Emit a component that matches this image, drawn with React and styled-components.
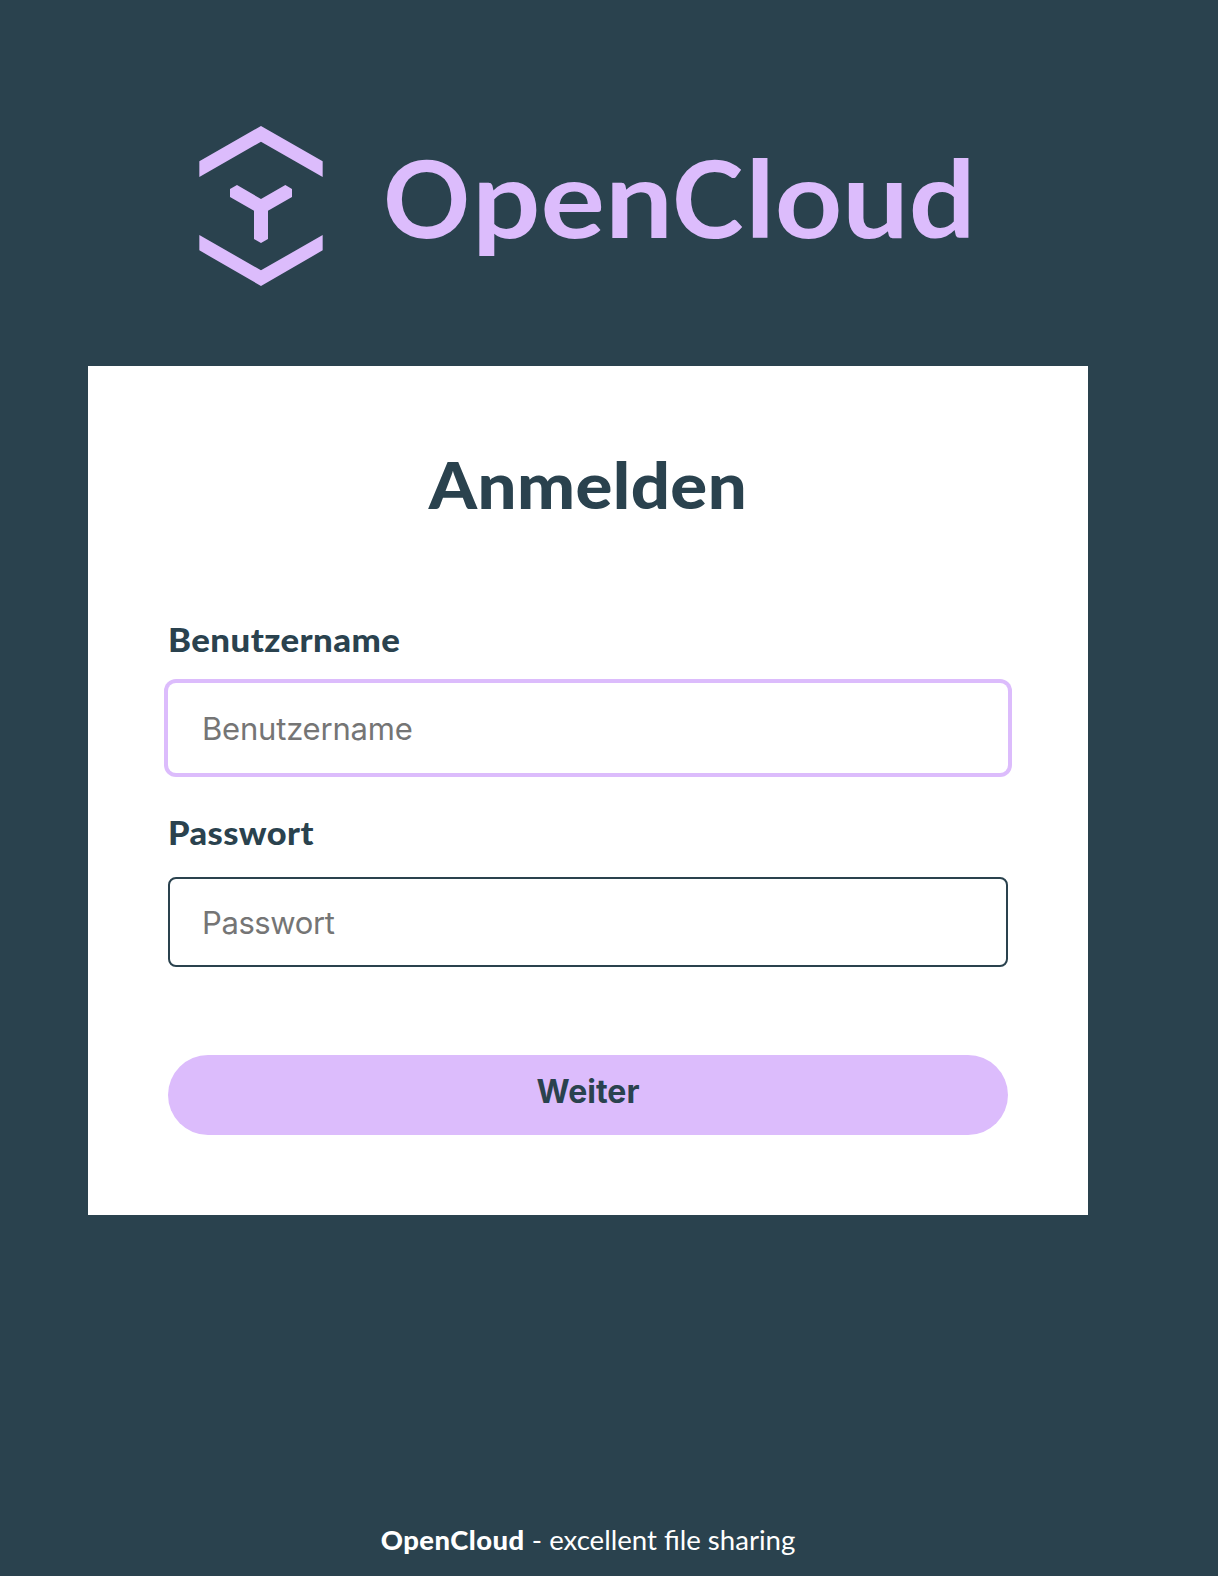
import React from "react";
import styled, { createGlobalStyle } from "styled-components";

const slate = "#2a424e";
const lilac = "#dcbcfc";
const brandFont = 'Lato, "Open Sans", sans-serif';
const uiFont = 'Inter, "Liberation Sans", sans-serif';

const GlobalStyle = createGlobalStyle`
  *, *::before, *::after { box-sizing: border-box; }
  body { margin: 0; background: ${slate}; }
`;

const Page = styled.div`
  display: flex;
  flex-direction: column;
  align-items: center;
  width: 1218px;
  height: 1576px;
  padding: 110px 42px 0 0;
  background: ${slate};
  color: ${slate};
  font-family: ${brandFont};
`;

const Logo = styled.svg`
  flex: none;
  width: 816px;
  height: 190px;
  margin-bottom: 66px;
  fill: ${lilac};
`;

const Wordmark = styled.text`
  font-family: ${brandFont};
  font-size: 108px;
  font-weight: 700;
`;

const Card = styled.form`
  display: flex;
  flex-direction: column;
  flex: none;
  width: 1000px;
  height: 849px;
  padding: 79px 80px 80px;
  background: #fff;
`;

const Title = styled.h1`
  margin: 0 0 90px;
  font-size: 64px;
  line-height: 80px;
  font-weight: 900;
  letter-spacing: 0.4px;
  text-align: center;
  transform: scaleX(1.075);
`;

const Field = styled.div`
  display: flex;
  flex-direction: column;
  margin-bottom: ${(p) => p.$gap};
`;

const Label = styled.label`
  align-self: flex-start;
  height: 40px;
  margin-bottom: ${(p) => p.$gap};
  font-size: 32px;
  line-height: 50px;
  font-weight: 900;
  letter-spacing: 0.4px;
  transform: scaleX(${(p) => p.$stretch});
  transform-origin: left;
`;

const Input = styled.input`
  width: 840px;
  height: 90px;
  padding: 0 32px;
  border: 2px solid ${(p) => (p.$active ? "transparent" : slate)};
  border-radius: 8px;
  outline: none;
  box-shadow: ${(p) => (p.$active ? `0 0 0 4px ${lilac}` : "none")};
  background: #fff;
  font-family: ${uiFont};
  font-size: 31px;
  letter-spacing: ${(p) => p.$tracking};
  &::placeholder { color: #757575; opacity: 1; }
`;

const Submit = styled.button`
  height: 80px;
  padding: 0 0 7px;
  border: 0;
  border-radius: 40px;
  background: ${lilac};
  color: ${slate};
  font-family: ${uiFont};
  font-size: 32px;
  font-weight: 700;
`;

const Footer = styled.footer`
  margin-top: auto;
  padding-bottom: 18px;
  color: #fff;
  font-size: 27.6px;
  line-height: 36px;
  white-space: pre;
`;

const FooterBrand = styled.strong`
  font-size: 27.4px;
  font-weight: 900;
  letter-spacing: 0.5px;
`;

export default function App() {
  return (
    <>
      <GlobalStyle />
      <Page>
        <Logo viewBox="180 110 816 190" role="img" aria-label="OpenCloud">
          <g transform="translate(180 110) scale(.33333)">
            <path d="M58 154 243 48l185 106v47L243 95 58 201z" />
            <path d="M58 375 243 481l185-106v46L243 528 58 421z" />
            <path d="M150 237l21-12 72 42 73-42 20 12v24l-72 41v85l-21 12-21-12v-85l-72-41z" />
          </g>
          <Wordmark y="238">
            <tspan x="383">O</tspan>
            <tspan x="472" textLength="201" lengthAdjust="spacingAndGlyphs">pen</tspan>
            <tspan x="672">C</tspan>
            <tspan x="745.5" textLength="230" lengthAdjust="spacingAndGlyphs">loud</tspan>
          </Wordmark>
        </Logo>
        <Card>
          <Title>Anmelden</Title>
          <Field $gap="35px">
            <Label htmlFor="username" $gap="28px" $stretch={1.087}>Benutzername</Label>
            <Input id="username" placeholder="Benutzername" $active $tracking="-0.2px" />
          </Field>
          <Field $gap="88px">
            <Label htmlFor="password" $gap="29px" $stretch={1.075}>Passwort</Label>
            <Input id="password" type="password" placeholder="Passwort" $tracking="-0.4px" />
          </Field>
          <Submit type="button">Weiter</Submit>
        </Card>
        <Footer><FooterBrand>OpenCloud</FooterBrand> - excellent file sharing</Footer>
      </Page>
    </>
  );
}
